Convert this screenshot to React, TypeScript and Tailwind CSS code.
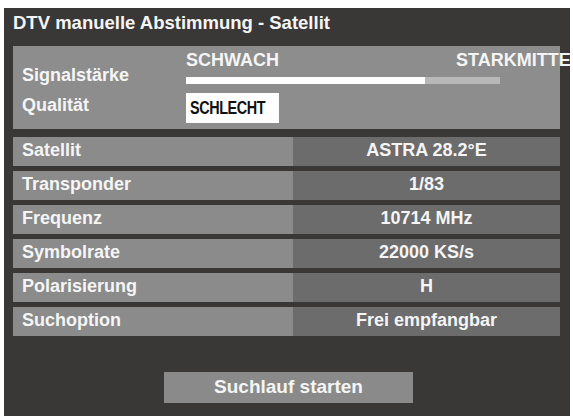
const rows = [
  { label: "Satellit", value: "ASTRA 28.2°E" },
  { label: "Transponder", value: "1/83" },
  { label: "Frequenz", value: "10714 MHz" },
  { label: "Symbolrate", value: "22000 KS/s" },
  { label: "Polarisierung", value: "H" },
  { label: "Suchoption", value: "Frei empfangbar" },
];

export default function App() {
  return (
    <div className="h-[418px] w-[573px] overflow-hidden bg-white pl-[4px] pt-[8px] font-['Liberation_Sans',Arial,sans-serif] font-bold text-[#f5f5f5]">
      <div className="flex h-[408px] w-[566px] flex-col bg-[#3a3737] pl-[9px] pr-[10px] pb-[13px]">
        {/* title */}
        <div className="h-[38px] pt-[5px] text-[18.5px] leading-[20px] whitespace-nowrap">DTV manuelle Abstimmung - Satellit</div>

        {/* signal / quality */}
        <div className="flex h-[83px] bg-[#8d8d8d] text-[18px] leading-[20px]">
          <div className="w-[173px] shrink-0 pl-[9px] pt-[19px]">
            <div>Signalstärke</div>
            <div className="mt-[10px]">Qualität</div>
          </div>
          <div className="flex flex-1 flex-col pt-[4px]">
            <div className="flex whitespace-nowrap">
              <span>SCHWACH</span>
              <span className="ml-[177px]">STARKMITTE</span>
            </div>
            <div className="mt-[7px] flex h-[7px]">
              <div className="w-[239px] bg-white" />
              <div className="w-[75px] bg-[#b8b8b8]" />
            </div>
            <div className="mt-[9px] flex h-[30px] w-[93px] items-center overflow-hidden bg-white pl-[4px] text-[#111]">
              <span className="inline-block origin-left scale-x-[0.8] text-[18px] tracking-[-0.5px] whitespace-nowrap">SCHLECHT</span>
            </div>
          </div>
        </div>

        {/* parameter rows */}
        <div className="mt-[8px] flex flex-col gap-[5px] text-[18px]">
          {rows.map((row) => (
            <div key={row.label} className="flex h-[29px] leading-[27px]">
              <div className="w-[280px] shrink-0 bg-[#8b8b8b] pl-[9px]">{row.label}</div>
              <div className="flex-1 bg-[#6c6c6c] text-center">{row.value}</div>
            </div>
          ))}
        </div>

        {/* start button */}
        <div className="mt-auto flex justify-center pl-[4px]">
          <div className="h-[31px] w-[249px] bg-[#8a8a8a] text-center text-[19px] leading-[30px]">
            Suchlauf starten
          </div>
        </div>
      </div>
    </div>
  );
}
